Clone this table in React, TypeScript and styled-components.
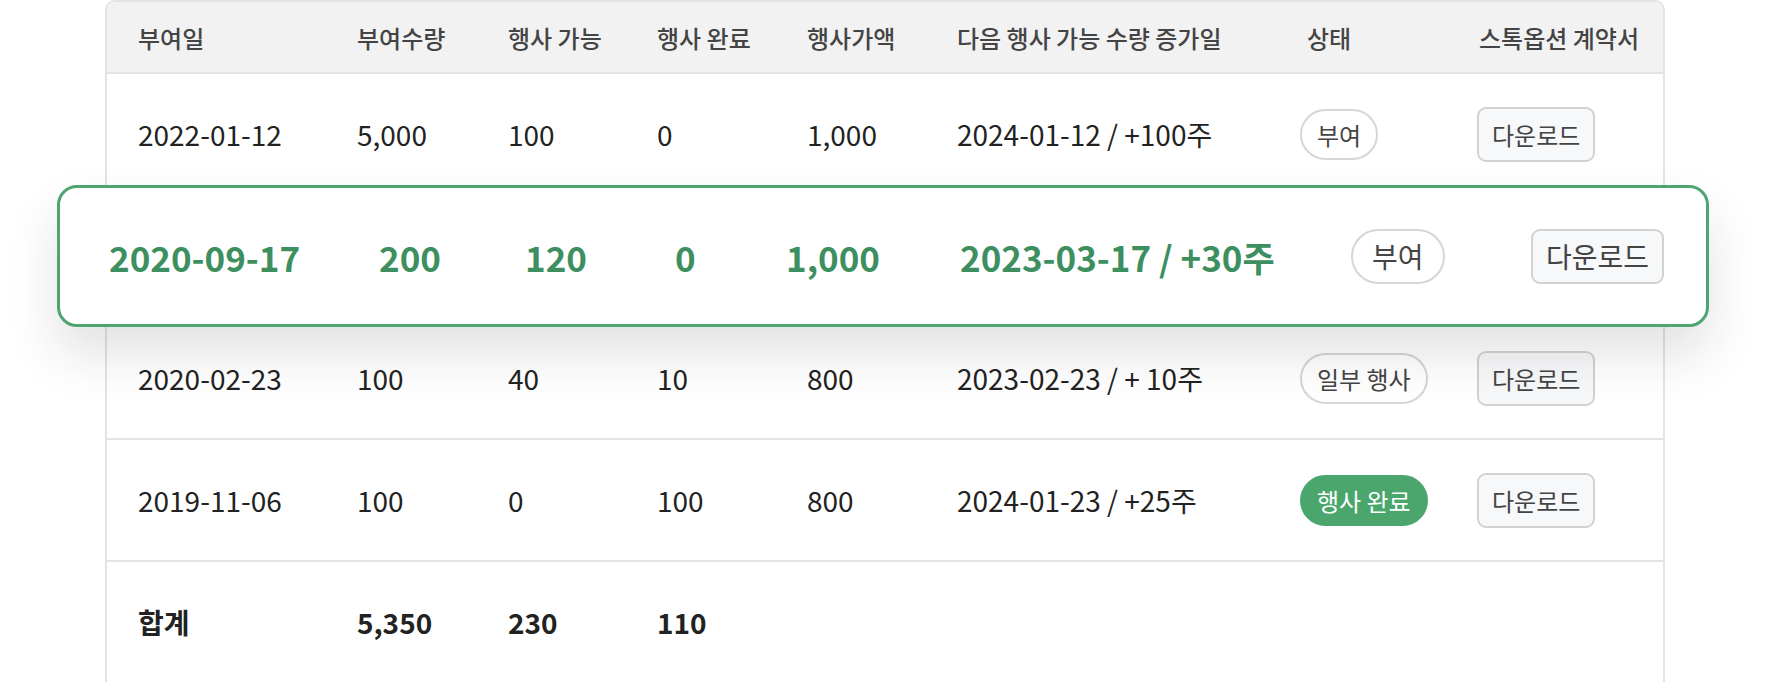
import React from "react";
import styled, { createGlobalStyle } from "styled-components";

const GlobalStyle = createGlobalStyle`
  html, body { margin: 0; padding: 0; background: #ffffff; }
  body {
    font-family: "Noto Sans CJK KR", "Noto Sans", sans-serif;
    color: #222;
    -webkit-font-smoothing: antialiased;
  }
`;

const Page = styled.div`
  width: 1770px;
  height: 682px;
  overflow: hidden;
  display: flex;
  justify-content: center;
`;

const Table = styled.div`
  position: relative;
  width: 1560px;
  box-sizing: border-box;
  border: 2px solid #e3e3e3;
  border-bottom: none;
  border-radius: 10px 10px 0 0;
  align-self: flex-start;
`;

const COLS = "219px 151px 149px 150px 150px 343px 177px 1fr";

const HeaderRow = styled.div`
  display: grid;
  grid-template-columns: ${COLS};
  padding-left: 31px;
  height: 70px;
  align-items: center;
  background: #f2f2f2;
  border-bottom: 2px solid #e3e3e3;
  border-radius: 8px 8px 0 0;
`;

const HeadCell = styled.div<{ $shift?: number }>`
  font-size: 24px;
  font-weight: 500;
  color: #444;
  padding-left: ${(p) => p.$shift ?? 0}px;
  white-space: nowrap;
`;

const Row = styled.div<{ $last?: boolean }>`
  display: grid;
  grid-template-columns: ${COLS};
  padding-left: 31px;
  height: 120px;
  align-items: center;
  border-bottom: ${(p) => (p.$last ? "none" : "2px solid #e4e4e4")};
`;

const Cell = styled.div<{ $bold?: boolean }>`
  font-size: 28px;
  font-weight: ${(p) => (p.$bold ? 700 : 400)};
  color: #222;
  white-space: nowrap;
  display: flex;
  align-items: center;
`;

const Badge = styled.span<{ $done?: boolean }>`
  display: inline-flex;
  align-items: center;
  justify-content: center;
  box-sizing: border-box;
  height: 51px;
  padding: 0 15px;
  border-radius: 999px;
  font-size: 24px;
  font-weight: 400;
  color: ${(p) => (p.$done ? "#fff" : "#444")};
  background: ${(p) => (p.$done ? "#4ba66e" : "#fff")};
  border: 2px solid ${(p) => (p.$done ? "#4ba66e" : "#d6d6d6")};
`;

const DownloadButton = styled.button`
  display: inline-flex;
  align-items: center;
  justify-content: center;
  box-sizing: border-box;
  height: 55px;
  padding: 0 13px;
  border-radius: 9px;
  border: 2px solid #d2d2d2;
  background: #f7f8fa;
  font-family: inherit;
  font-size: 24px;
  color: #444;
  cursor: pointer;
`;

const CARD_COLS = "270px 146px 150px 111px 174px 391px 180px 1fr";

const HighlightCard = styled.div`
  position: absolute;
  top: 183px;
  left: -50px;
  width: 1652px;
  height: 142px;
  box-sizing: border-box;
  border: 3px solid #4ea56f;
  border-radius: 20px;
  background: #fff;
  box-shadow: 0 28px 50px rgba(40, 30, 30, 0.13);
  display: grid;
  grid-template-columns: ${CARD_COLS};
  padding-left: 49px;
  align-items: center;
`;

const CardCell = styled.div`
  font-size: 35px;
  font-weight: 700;
  color: #3d8f5f;
  white-space: nowrap;
`;

const CardBadge = styled(Badge)`
  height: 55px;
  padding: 0 19px;
  font-size: 28px;
`;

const CardButton = styled(DownloadButton)`
  height: 55px;
  padding: 0 13px;
  font-size: 28px;
`;

type Status = "부여" | "일부 행사" | "행사 완료";

interface Grant {
  date: string;
  qty: string;
  avail: string;
  done: string;
  price: string;
  next: string;
  status: Status;
}

const grants: Grant[] = [
  { date: "2022-01-12", qty: "5,000", avail: "100", done: "0", price: "1,000", next: "2024-01-12 / +100주", status: "부여" },
  { date: "2020-09-17", qty: "200", avail: "120", done: "0", price: "1,000", next: "2023-03-17 / +30주", status: "부여" },
  { date: "2020-02-23", qty: "100", avail: "40", done: "10", price: "800", next: "2023-02-23 / + 10주", status: "일부 행사" },
  { date: "2019-11-06", qty: "100", avail: "0", done: "100", price: "800", next: "2024-01-23 / +25주", status: "행사 완료" },
];

const headers = ["부여일", "부여수량", "행사 가능", "행사 완료", "행사가액", "다음 행사 가능 수량 증가일", "상태", "스톡옵션 계약서"];

export default function App() {
  const hl = grants[1];
  return (
    <>
      <GlobalStyle />
      <Page>
        <Table>
          <HeaderRow>
            {headers.map((h, i) => (
              <HeadCell key={h} $shift={i === 6 ? 7 : i === 7 ? 2 : 0}>
                {h}
              </HeadCell>
            ))}
          </HeaderRow>
          {grants.map((g) => (
            <Row key={g.date}>
              <Cell>{g.date}</Cell>
              <Cell>{g.qty}</Cell>
              <Cell>{g.avail}</Cell>
              <Cell>{g.done}</Cell>
              <Cell>{g.price}</Cell>
              <Cell>{g.next}</Cell>
              <Cell>
                <Badge $done={g.status === "행사 완료"}>{g.status}</Badge>
              </Cell>
              <Cell>
                <DownloadButton>다운로드</DownloadButton>
              </Cell>
            </Row>
          ))}
          <Row $last>
            <Cell $bold>합계</Cell>
            <Cell $bold>5,350</Cell>
            <Cell $bold>230</Cell>
            <Cell $bold>110</Cell>
            <Cell />
            <Cell />
            <Cell />
            <Cell />
          </Row>
          <HighlightCard>
            <CardCell>{hl.date}</CardCell>
            <CardCell>{hl.qty}</CardCell>
            <CardCell>{hl.avail}</CardCell>
            <CardCell>{hl.done}</CardCell>
            <CardCell>{hl.price}</CardCell>
            <CardCell>{hl.next}</CardCell>
            <div>
              <CardBadge>{hl.status}</CardBadge>
            </div>
            <div>
              <CardButton>다운로드</CardButton>
            </div>
          </HighlightCard>
        </Table>
      </Page>
    </>
  );
}
